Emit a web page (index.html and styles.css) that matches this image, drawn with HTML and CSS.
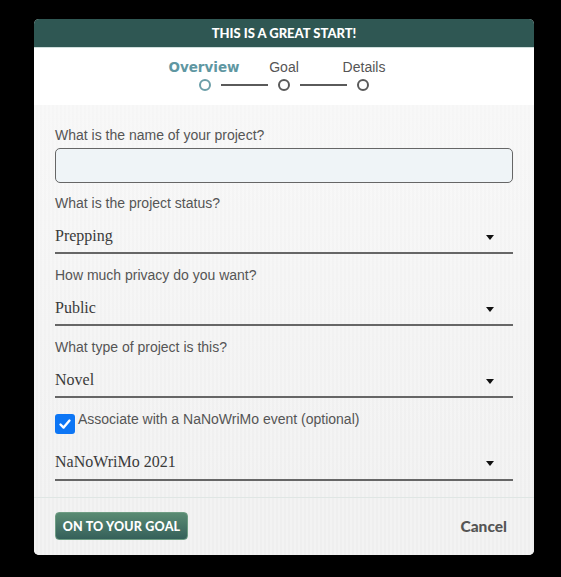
FILE: index.html
```html
<!DOCTYPE html>
<html>
<head>
<meta charset="utf-8">
<link rel="stylesheet" href="styles.css">
</head>
<body>
<div class="modal">
  <div class="modal-header">THIS IS A GREAT START!</div>
  <div class="steps">
    <div class="step-labels">
      <span class="step-label active">Overview</span>
      <span class="step-label">Goal</span>
      <span class="step-label">Details</span>
    </div>
    <div class="step-track">
      <span class="dot active"></span>
      <span class="bar"></span>
      <span class="dot"></span>
      <span class="bar"></span>
      <span class="dot"></span>
    </div>
  </div>
  <div class="modal-body">
    <label class="field-label">What is the name of your project?</label>
    <div class="text-input"></div>

    <label class="field-label">What is the project status?</label>
    <div class="select"><span class="select-value">Prepping</span><span class="caret"></span></div>

    <label class="field-label">How much privacy do you want?</label>
    <div class="select"><span class="select-value">Public</span><span class="caret"></span></div>

    <label class="field-label">What type of project is this?</label>
    <div class="select"><span class="select-value">Novel</span><span class="caret"></span></div>

    <div class="check-row">
      <span class="checkbox">
        <svg width="14" height="14" viewBox="0 0 14 14"><path d="M2.5 7.5 L5.6 10.6 L11.5 3.6" fill="none" stroke="#fff" stroke-width="2.4" stroke-linecap="round" stroke-linejoin="round"/></svg>
      </span>
      <span class="check-label">Associate with a NaNoWriMo event (optional)</span>
    </div>
    <div class="select event"><span class="select-value">NaNoWriMo 2021</span><span class="caret"></span></div>
  </div>
  <div class="modal-footer">
    <button class="btn-primary">ON TO YOUR GOAL</button>
    <span class="btn-cancel">Cancel</span>
  </div>
</div>
</body>
</html>
```

FILE: styles.css
```css
html, body {
  margin: 0;
  padding: 0;
  background: #000;
}
body {
  padding: 19px 0 0 34px;
  height: 577px;
  box-sizing: border-box;
}
.modal {
  width: 500px;
  height: 536px;
  border-radius: 5px;
  overflow: hidden;
  display: flex;
  flex-direction: column;
  background: #f2f2f2;
}
.modal-header {
  height: 28px;
  line-height: 28px;
  background: #2f5753;
  color: #fff;
  text-align: center;
  font-family: Lato, "Open Sans", sans-serif;
  font-weight: 900;
  font-size: 13px;
  border-bottom: 1px solid #cfdedc;
}
.steps {
  background: #fff;
  height: 57px;
  display: flex;
  flex-direction: column;
  align-items: center;
  box-sizing: border-box;
  padding-top: 10px;
}
.step-labels {
  display: flex;
  height: 17px;
  align-items: flex-end;
}
.step-label {
  width: 80px;
  text-align: center;
  font-family: "Liberation Sans", Arial, sans-serif;
  font-size: 14px;
  color: #555;
  line-height: 16px;
}
.step-label.active {
  font-family: "DejaVu Sans", Verdana, sans-serif;
  font-weight: bold;
  font-size: 13.5px;
  color: #5f97a2;
}
.step-track {
  display: flex;
  align-items: center;
  margin-top: 4px;
  margin-left: -1px;
}
.dot {
  width: 8px;
  height: 8px;
  border: 2px solid #5a5a5a;
  border-radius: 50%;
}
.dot.active {
  border-color: #6b9ea8;
}
.bar {
  width: 47px;
  height: 2px;
  background: #5a5a5a;
  margin: 0 10px;
}
.modal-body {
  flex: 1;
  padding: 22px 21px 0 21px;
  display: flex;
  flex-direction: column;
  background:
    repeating-linear-gradient(90deg, rgba(255,255,255,0.25) 0 2px, rgba(0,0,0,0.0) 2px 4px),
    linear-gradient(#f6f6f6, #efefef);
  border-bottom: 1px solid #dfe6e4;
}
.field-label {
  display: block;
  font-family: "Liberation Sans", Arial, sans-serif;
  font-size: 14px;
  line-height: 16px;
  color: #555;
}
.text-input {
  margin-top: 5px;
  height: 33px;
  border: 1px solid #666;
  border-radius: 5px;
  background: #eff4f7;
  margin-bottom: 12px;
}
.select {
  margin-top: 5px;
  display: flex;
  align-items: center;
  justify-content: space-between;
  padding: 10px 0 6px 0;
  border-bottom: 2px solid #666;
  margin-bottom: 13px;
}
.select-value {
  font-family: "Liberation Serif", "Times New Roman", serif;
  font-size: 16px;
  line-height: 20px;
  color: #3a3a3a;
}
.caret {
  width: 0;
  height: 0;
  border-left: 4px solid transparent;
  border-right: 4px solid transparent;
  border-top: 5px solid #111;
  margin-right: 19px;
  margin-top: 2px;
}
.check-row {
  display: flex;
  align-items: flex-start;
  margin-top: 3px;
}
.checkbox {
  width: 20px;
  height: 20px;
  border-radius: 3px;
  background: #0d76f5;
  display: flex;
  align-items: center;
  justify-content: center;
}
.check-label {
  margin-left: 3px;
  margin-top: -3px;
  font-family: "Liberation Sans", Arial, sans-serif;
  font-size: 14px;
  line-height: 16px;
  color: #555;
}
.select.event {
  margin-top: 8px;
  padding-bottom: 7px;
}
.modal-footer {
  height: 57px;
  box-sizing: border-box;
  display: flex;
  align-items: center;
  justify-content: space-between;
  padding: 0 27px 1px 21px;
  background:
    repeating-linear-gradient(90deg, rgba(255,255,255,0.25) 0 2px, rgba(0,0,0,0.0) 2px 4px),
    #efefef;
}
.btn-primary {
  height: 28px;
  width: 133px;
  padding: 0;
  border: 1px solid #6f9d84;
  border-radius: 4px;
  background: linear-gradient(#5a8b73, #35605a);
  color: #fff;
  font-family: Lato, "Open Sans", sans-serif;
  font-weight: 900;
  font-size: 12.5px;
  letter-spacing: 0.2px;
}
.btn-cancel {
  font-family: Lato, "Open Sans", sans-serif;
  font-weight: 900;
  font-size: 15.5px;
  color: #555;
}
```
